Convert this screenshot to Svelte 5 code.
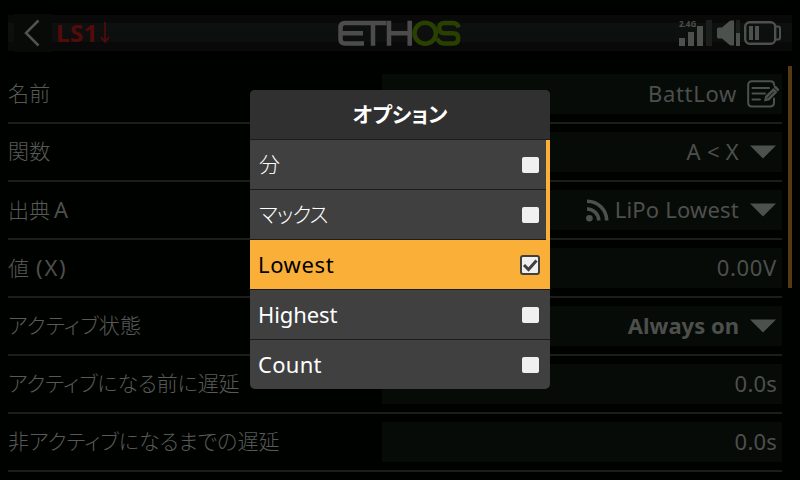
<script>
  const rows = [
    { label: '名前', value: 'BattLow', icon: 'edit', ls: 0.7, lls: 0.3 },
    { label: '関数', value: 'A < X', icon: 'arrow', ls: 0.3, lls: 0.3 },
    { label: '出典', latin: 'A', gap: 4, latinLs: 0, value: 'LiPo Lowest', icon: 'arrow', ls: 0.2, lls: 0, feed: true },
    { label: '値', latin: '(X)', gap: 7, latinLs: 1.8, value: '0.00V', ls: 0.7, lls: 0 },
    { label: 'アクティブ状態', value: 'Always on', icon: 'arrow', ls: 0, lls: 0.2, bold: true },
    { label: 'アクティブになる前に遅延', value: '0.0s', ls: 0.2, lls: -0.1 },
    { label: '非アクティブになるまでの遅延', value: '0.0s', ls: 0.2, lls: 0 }
  ];
  const options = [
    { text: '分', ls: 0, kana: true },
    { text: 'マックス', ls: -1, kana: true },
    { text: 'Lowest', ls: 0.6, checked: true },
    { text: 'Highest', ls: -0.1 },
    { text: 'Count', ls: 0.3 }
  ];
</script>

<div class="screen">
  <header>
    <button class="back" aria-label="Back">
      <svg width="38" height="38" viewBox="0 0 38 38"><path d="M24.5 6.5 L12 19 L24.5 31.5" fill="none" stroke="#515351" stroke-width="2.5" /></svg>
    </button>
    <span class="title">LS1</span>
    <svg class="down" width="10" height="22" viewBox="0 0 10 22"><path d="M5 0 V20 M1 15 L5 20 L9 15" fill="none" stroke="#560b0b" stroke-width="1.6" /></svg>
    <svg class="logo" width="124" height="27" viewBox="0 0 124 27" fill="none" stroke-width="4.500">
      <g stroke="#4c4c4c">
        <path d="M48.500 3 H7 Q2.500 3 2.500 7.500 V19 Q2.500 23.500 7 23.500 H26 M4 13.200 H25 M35 3 V25.700" />
        <path d="M51 .800 V25.700 M71.700 .800 V25.700 M51 13.200 H72" />
      </g>
      <g stroke="#294000">
        <ellipse cx="87.200" cy="13.300" rx="10.700" ry="10.500" />
        <path d="M120.500 7.500 Q119.500 3 115 3 H106.500 Q101.300 3 101.300 8 Q101.300 13.200 106.500 13.200 H115 Q120.200 13.200 120.200 18.300 Q120.200 23.500 115 23.500 H106 Q101.500 23.500 99 18.500" />
      </g>
    </svg>
    <div class="status">
      <div class="signal">
        <span>2.4G</span>
        <svg width="33" height="26" viewBox="0 0 33 26"><path d="M0 18h6v8H0zM9 12h6v14H9zM18 6h6v20h-6z" fill="#4d514d" /><path d="M27 0h6v26h-6z" fill="#1b1e1b" /></svg>
      </div>
      <svg width="24" height="26" viewBox="0 0 24 26"><path d="M0 9q0-1.500 1.500-1.500H5L12 1.500Q13 .5 14.500.5H17V25.500H14.500Q13 25.500 12 24.500L5 18.500H1.500Q0 18.500 0 17z" fill="#4d514d" /><path d="M19 0h4v13h-4z" fill="#1b1e1b" /><path d="M19 13h4v13h-4z" fill="#4d514d" /></svg>
      <svg width="37" height="24" viewBox="0 0 37 24"><rect x="1.200" y="1.200" width="30" height="21.600" rx="4.500" fill="none" stroke="#4d514d" stroke-width="2.400" /><path d="M31.500 5.500h2.500q2 0 2 2v9q0 2-2 2h-2.500" fill="none" stroke="#4d514d" stroke-width="2" /><path d="M5 5h4v14H5zM11 5h4v14h-4z" fill="#4d514d" /></svg>
    </div>
  </header>

  <main>
    <div class="form">
      {#each rows as row}
        <div class="row">
          <div class="label" style:gap="{row.gap ?? 0}px">
            <span class="kana" style:letter-spacing="{row.lls}px">{row.label}</span>
            {#if row.latin}<span style:letter-spacing="{row.latinLs}px">{row.latin}</span>{/if}
          </div>
          <div class="field" class:plain={!row.icon}>
            {#if row.feed}
              <svg class="feed" width="23" height="23" viewBox="0 0 23 23"><circle cx="3.400" cy="19.300" r="3.300" fill="#4d514d" /><path d="M1 10 A11.500 11.500 0 0 1 12.700 21.500 M1 2.200 A19.500 19.500 0 0 1 20.700 21.500" fill="none" stroke="#4d514d" stroke-width="3.600" /></svg>
            {/if}
            <span class="value" class:bold={row.bold} style:letter-spacing="{row.ls}px">{row.value}</span>
            {#if row.icon === 'arrow'}
              <svg class="arrow" width="26" height="14" viewBox="0 0 26 14"><path d="M0 .5H26L13 13.500Z" fill="#4d514d" /></svg>
            {:else if row.icon === 'edit'}
              <svg class="edit" width="32" height="28" viewBox="0 0 32 28" fill="none" stroke="#4d514d" stroke-width="2" stroke-linecap="round">
                <path d="M27 5 V4.500 Q27 1.200 23.500 1.200 H5 Q1.200 1.200 1.200 5 V22.500 Q1.200 26.500 5 26.500 H23 Q27 26.500 27 22.500 V18.500" />
                <path d="M5.500 8 H22 M5.500 13.500 H18 M5.500 19.500 H13" />
                <path d="M17 21.500 L18.200 16 L26.500 8 L30.500 12 L22.500 20.300 Z" fill="#4d514d" stroke="none" />
                <path d="M28.200 7 L31 9.800" stroke-width="2.600" />
                <path d="M20.500 18 L26.500 12" stroke="#080c08" stroke-width="1" />
              </svg>
            {/if}
          </div>
        </div>
      {/each}
    </div>
    <div class="scrollbar"></div>
  </main>

  <div class="dialog" role="dialog" aria-label="オプション">
    <h2>オプション</h2>
    <div class="list">
      {#each options as option}
        <div class="option" class:selected={option.checked}>
          <span class:kana={option.kana} style:letter-spacing="{option.ls}px">{option.text}</span>
          {#if option.checked}
            <svg width="20" height="20" viewBox="0 0 20 20"><rect x="1" y="1" width="18" height="18" rx="2" fill="#f0f0f0" stroke="#404040" stroke-width="2" /><path d="M4 10 L8.500 14.500 L16.500 5.500" fill="none" stroke="#404040" stroke-width="3" /></svg>
          {:else}
            <i></i>
          {/if}
        </div>
      {/each}
      <div class="thumb"></div>
    </div>
  </div>
</div>

<style>
  :global(body) { margin: 0; background: #000200; }
  .screen {
    position: relative; width: 800px; height: 480px; overflow: hidden;
    box-sizing: border-box; padding-left: 8px;
    background: #000200; color: #4d4f4d;
    font: 22px/40px "Noto Sans", "Noto Sans CJK JP", sans-serif;
    font-feature-settings: "palt";
  }
  header {
    display: flex; align-items: center; height: 66px; margin-right: 8px; box-sizing: border-box;
    background: linear-gradient(#000200 0 8px, #000 8px 15px, #080908 15px 23px, #0e100f 23px 32px, #0d0f0e 32px 42px, #080908 42px 51px, #000 51px 58px, #000200 58px);
  }
  .back { width: 38px; height: 38px; margin-left: 6px; padding: 0; border: 0; background: #070a07; }
  .back svg { display: block; }
  .title { margin-left: 4px; color: #560b0b; font-weight: 700; font-size: 24px; letter-spacing: .5px; width: 43px; }
  .down { margin-left: 1px; }
  .logo { margin-left: 228px; }
  .status { display: flex; align-items: center; margin-left: auto; padding-right: 11px; }
  .signal { position: relative; height: 26px; margin-right: 5px; }
  .signal svg, .status > svg { display: block; }
  .signal span { position: absolute; left: 0; top: -1px; font: 700 8px/9px "Noto Sans", sans-serif; }
  .status > svg:last-child { margin-left: 3px; }

  main { display: flex; gap: 6px; }
  .form { width: 774px; }
  .row {
    display: flex; justify-content: space-between; align-items: center;
    height: 58px; box-sizing: border-box; border-bottom: 2px solid #1b1f1c;
  }
  .label { display: flex; align-items: baseline; white-space: nowrap; margin-top: -2px; }
  .label .kana { font-weight: 300; color: #585a58; }
  .kana { font-size: 21px; }
  .field {
    display: flex; align-items: center; justify-content: flex-end;
    width: 400px; height: 40px; padding-right: 6px; box-sizing: border-box; background: #070b07;
  }
  .plain { padding-right: 5px; }
  .value { white-space: nowrap; margin-top: -2px; }
  .bold { font-weight: 700; }
  .feed { margin-right: 6px; }
  .arrow { margin-left: 11px; }
  .edit { margin-left: 10px; margin-right: -3px; }
  .scrollbar { width: 4px; height: 222px; background: #573a14; }

  .dialog {
    position: absolute; left: 250px; top: 90px; width: 300px; height: 299px;
    border-radius: 5px; overflow: hidden; background: #404040; color: #fff;
  }
  h2 {
    margin: 0; height: 50px; box-sizing: border-box; border-bottom: 1px solid #1c1c1c;
    background: #303030; font-size: 21px; line-height: 48px; font-weight: 700; text-align: center;
  }
  .list { position: relative; }
  .option {
    display: flex; align-items: center; justify-content: space-between;
    height: 50px; box-sizing: border-box; padding: 0 10px 0 8px; border-bottom: 1px solid #1c1c1c;
  }
  .option:nth-child(5) { border-bottom-color: #404040; }
  .option span { margin-top: -2px; }
  .option .kana { font-weight: 300; padding-left: 1px; }
  .option i { width: 17px; height: 16px; margin-right: 1px; border-radius: 2px; background: #f0f0f0; }
  .selected { background: #f9af38; color: #000; }
  .thumb { position: absolute; right: 0; top: 0; width: 4px; height: 100px; background: #f9af38; }
</style>
